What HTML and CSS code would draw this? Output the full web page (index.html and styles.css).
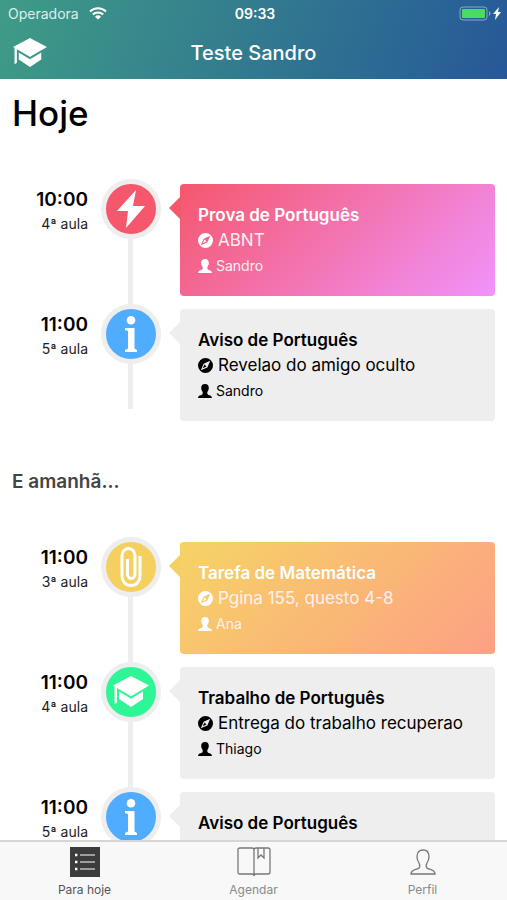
FILE: index.html
```html
<!DOCTYPE html>
<html lang="pt-BR">
<head>
  <meta charset="UTF-8">
  <meta name="viewport" content="width=device-width, initial-scale=1">
  <title>Teste Sandro</title>
  <link rel="stylesheet" href="styles.css">
</head>
<body>
  <svg class="sprite" aria-hidden="true">
    <symbol id="school" viewBox="0 0 36 32">
      <path d="M18 0 36 9.500 18 20.500 0 9.500z"/>
      <path d="M1.500 10h2.500v16.500L1.500 28z"/>
      <path d="M6 13 18 21l12-8v10L18 31 6 23z"/>
      <path class="cut" d="M4.500 13.500 18 21.500l13.500-8"/>
    </symbol>
    <symbol id="flash" viewBox="0 0 28 38">
      <path d="M19 0 0 21h11L9 38l19-22H16z"/>
    </symbol>
    <symbol id="info" viewBox="0 0 14 36">
      <circle cx="7" cy="4.300" r="4.300"/>
      <path d="M1 12h9.500v20.500L13 34v2H1v-2l3-1.500V15l-3-1z"/>
    </symbol>
    <symbol id="attach" viewBox="0 0 22 40">
      <path class="wire" d="M20 9v20c0 5.500-3.500 9.500-9 9.500S2 34.500 2 29V9c0-4.500 3-7.500 6.500-7.500S15 4.500 15 9v18c0 2.500-1.500 4.500-3.700 4.500S7.500 29.500 7.500 27V12"/>
    </symbol>
    <symbol id="compass" viewBox="0 0 16 16">
      <path fill-rule="evenodd" d="M8 0a8 8 0 1 1 0 16A8 8 0 0 1 8 0zM13 3 6 6 3 13 10 10zM7 7 9 9 5 11z"/>
    </symbol>
    <symbol id="person" viewBox="0 0 24 24">
      <path d="M12 0c4.500 0 6.500 2.500 6.500 6.500 0 3-1 5-2 6.500-1 1.500-.7 4 .3 4.800C18 19 24 19 24 24H0c0-5 6-5 7.200-6.200 1-.8 1.300-3.300.3-4.800-1-1.500-2-3.500-2-6.500C5.500 2.500 7.500 0 12 0z"/>
    </symbol>
  </svg>

  <header class="header">
    <div class="status">
      <div class="carrier">
        <span>Operadora</span>
        <svg class="wifi" viewBox="0 0 18 13" aria-hidden="true">
          <path class="arc" d="M1 4.500a11.500 11.500 0 0 1 16 0M3.800 7.500a7.500 7.500 0 0 1 10.400 0"/>
          <path d="M9 12.500 6 9.700a4.300 4.300 0 0 1 6 0z"/>
        </svg>
      </div>
      <span class="clock">09:33</span>
      <svg class="battery" viewBox="0 0 43 15" aria-hidden="true">
        <rect class="case" x="1" y="1" width="27" height="13" rx="3"/>
        <rect class="charge" x="3" y="3" width="23" height="9" rx="1"/>
        <path class="tip" d="M30 5c2 1 2 4 0 5z"/>
        <path d="M40 1l-6 7h3l-1 6 6-8h-3z"/>
      </svg>
    </div>
    <div class="navbar">
      <svg class="logo" aria-hidden="true"><use href="#school"/></svg>
      <h1>Teste Sandro</h1>
    </div>
  </header>

  <main class="content">
    <h2 class="today">Hoje</h2>
    <ol class="timeline">
      <li class="item exam">
        <div class="when"><time>10:00</time><span>4ª aula</span></div>
        <div class="marker"><svg class="i-flash"><use href="#flash"/></svg></div>
        <article class="card">
          <h3>Prova de Português</h3>
          <p class="subject"><svg><use href="#compass"/></svg>ABNT</p>
          <p class="author"><svg><use href="#person"/></svg>Sandro</p>
        </article>
      </li>
      <li class="item notice">
        <div class="when"><time>11:00</time><span>5ª aula</span></div>
        <div class="marker"><svg class="i-info"><use href="#info"/></svg></div>
        <article class="card">
          <h3>Aviso de Português</h3>
          <p class="subject"><svg><use href="#compass"/></svg>Revelao do amigo oculto</p>
          <p class="author"><svg><use href="#person"/></svg>Sandro</p>
        </article>
      </li>
    </ol>

    <h2 class="tomorrow">E amanhã...</h2>
    <ol class="timeline">
      <li class="item homework">
        <div class="when"><time>11:00</time><span>3ª aula</span></div>
        <div class="marker"><svg class="i-attach"><use href="#attach"/></svg></div>
        <article class="card">
          <h3>Tarefa de Matemática</h3>
          <p class="subject"><svg><use href="#compass"/></svg>Pgina 155, questo 4-8</p>
          <p class="author"><svg><use href="#person"/></svg>Ana</p>
        </article>
      </li>
      <li class="item project">
        <div class="when"><time>11:00</time><span>4ª aula</span></div>
        <div class="marker"><svg class="i-school"><use href="#school"/></svg></div>
        <article class="card">
          <h3>Trabalho de Português</h3>
          <p class="subject"><svg><use href="#compass"/></svg>Entrega do trabalho recuperao</p>
          <p class="author"><svg><use href="#person"/></svg>Thiago</p>
        </article>
      </li>
      <li class="item notice">
        <div class="when"><time>11:00</time><span>5ª aula</span></div>
        <div class="marker"><svg class="i-info"><use href="#info"/></svg></div>
        <article class="card">
          <h3>Aviso de Português</h3>
          <p class="subject"><svg><use href="#compass"/></svg>Revelao do amigo oculto</p>
          <p class="author"><svg><use href="#person"/></svg>Sandro</p>
        </article>
      </li>
    </ol>
  </main>

  <nav class="tabs">
    <a href="#hoje" class="active" aria-current="page">
      <svg viewBox="0 0 34 30" aria-hidden="true">
        <path class="box" d="M2 0h30v30H2z"/>
        <path class="rows" d="M12 8h15M12 15h15M12 22h15"/>
        <path class="dots" d="M7 6.800h2.400v2.400H7zM7 13.800h2.400v2.400H7zM7 20.800h2.400v2.400H7z"/>
      </svg>
      Para hoje
    </a>
    <a href="#agendar">
      <svg class="outline" viewBox="0 0 34 30" aria-hidden="true">
        <path d="M17 3v26c0-1.500-1-2-2-2H3c-1.500 0-2-.5-2-2V3c0-1.500.5-2 2-2h12c1.500 0 2 .8 2 2zc0-1.200.5-2 2-2h12c1.500 0 2 .5 2 2v22c0 1.500-.5 2-2 2H19c-1 0-2 .5-2 2"/>
        <path d="M21 1v10l3-3 3 3V1"/>
      </svg>
      Agendar
    </a>
    <a href="#perfil">
      <svg class="outline" viewBox="0 0 34 30" aria-hidden="true">
        <path d="M17 3c4 0 6 2.500 6 6.500 0 3-1 5-2 6.500-.8 1.500-.8 4 0 5 1.500 1.500 8 1.500 8 6H5c0-4.500 6.500-4.500 8-6 .8-1 .8-3.500 0-5-1-1.500-2-3.500-2-6.500C11 5.500 13 3 17 3z"/>
      </svg>
      Perfil
    </a>
  </nav>
</body>
</html>
```
FILE: styles.css
```css
* { box-sizing: border-box; margin: 0; padding: 0; }

body {
  display: flex;
  flex-direction: column;
  height: 100vh;
  background: #fff;
  color: #000;
  font-family: Inter, "Liberation Sans", sans-serif;
}

svg { display: block; flex: none; fill: currentColor; }
.sprite { position: absolute; width: 0; height: 0; }

/* header */
.header {
  flex: none;
  background: linear-gradient(110deg, #3f9c86, #265898);
  color: #fff;
}
.status {
  display: grid;
  grid-template-columns: 1fr auto 1fr;
  align-items: center;
  height: 27px;
  padding: 0 5px 0 8px;
  font-size: 14px;
}
.carrier { display: flex; align-items: center; gap: 10px; color: #dcefed; }
.wifi { width: 18px; height: 13px; color: #fff; }
.arc { fill: none; stroke: #fff; stroke-width: 2; }
.clock { font-weight: 600; }
.battery { width: 43px; height: 15px; justify-self: end; }
.case { fill: none; stroke: #86a8cb; }
.charge { fill: #4cd964; }
.tip { fill: #86a8cb; }
.navbar {
  display: grid;
  grid-template-columns: 40px 1fr 40px;
  align-items: center;
  height: 52px;
  padding: 0 12px;
}
.navbar h1 { font-size: 20px; font-weight: 500; text-align: center; }
.logo { width: 36px; height: 30px; --hole: #40988a; }
.cut { fill: none; stroke: var(--hole); stroke-width: 2; }

/* content */
.content { flex: 1; min-height: 0; overflow-y: auto; padding: 0 12px; scrollbar-width: none; }
.today { padding-top: 12px; font-size: 35px; line-height: 44px; font-weight: 500; }
.tomorrow { padding-top: 49px; font-size: 19px; line-height: 24px; font-weight: 600; color: #444; }

.timeline { margin-top: 49px; list-style: none; }
.tomorrow + .timeline { margin-top: 48px; }
.item {
  display: grid;
  grid-template-columns: 76px 60px 1fr;
  column-gap: 13px;
  position: relative;
  padding-bottom: 13px;
}
.item::before {
  content: "";
  position: absolute;
  top: 0;
  bottom: 0;
  left: 116px;
  width: 5px;
  background: #eee;
}
.item:last-child { padding-bottom: 0; }
.item:last-child::before { bottom: 12px; }

.when { padding-top: 5px; text-align: right; }
.when time { display: block; font-size: 19px; line-height: 22px; font-weight: 600; }
.when span { display: block; padding-top: 3px; font-size: 14px; line-height: 20px; color: #222; }

.marker {
  position: relative;
  display: flex;
  align-items: center;
  justify-content: center;
  width: 60px;
  height: 60px;
  margin-top: -5px;
  border: 5px solid #eee;
  border-radius: 50%;
  background: #4facfe;
  color: #fff;
}
.exam .marker { background: #f5576c; }
.homework .marker { background: #f4d060; }
.project .marker { background: #2ef595; --hole: #2ef595; }
.i-flash { width: 28px; height: 38px; }
.i-info { width: 14px; height: 36px; }
.i-attach { width: 22px; height: 40px; }
.i-school { width: 38px; height: 32px; }
.wire { fill: none; stroke: #fff; stroke-width: 3; }

.card {
  position: relative;
  margin-left: 6px;
  padding: 18px;
  border-radius: 4px;
  background: #eee;
}
.card::before {
  content: "";
  position: absolute;
  top: 12px;
  left: -11px;
  border: solid transparent;
  border-width: 12px 12px 12px 0;
  border-right-color: #eee;
}
.card h3 { font-size: 17px; line-height: 26px; font-weight: 600; }
.card p { display: flex; align-items: center; line-height: 25px; }
.card .subject { gap: 5px; font-size: 17px; }
.card .author { gap: 4px; font-size: 14px; }
.subject svg { width: 15px; height: 15px; }
.author svg { width: 14px; height: 14px; }

.exam .card { background: linear-gradient(135deg, #f5576c, #f093fb); }
.exam .card::before { border-right-color: #f5576c; }
.homework .card { background: linear-gradient(135deg, #f6d365, #fda085); }
.homework .card::before { border-right-color: #f4d060; }
.exam h3, .exam svg, .homework h3, .homework svg { color: #fff; }
.exam p, .homework p { color: #fff0f0; }

/* tab bar */
.tabs {
  flex: none;
  display: flex;
  height: 60px;
  border-top: 2px solid #d6d6d6;
  background: #f8f8f8;
}
.tabs a {
  flex: 1;
  display: flex;
  flex-direction: column;
  align-items: center;
  gap: 5px;
  padding-top: 5px;
  font-size: 12px;
  line-height: 15px;
  color: #8a8a8a;
  text-decoration: none;
}
.tabs a.active { color: #555; }
.tabs svg { width: 34px; height: 30px; }
.outline { fill: none; stroke: #777; stroke-width: 1.300; }
.box { fill: #3c3c3c; }
.rows { stroke: #fff; }
.dots { fill: #fff; }
```
